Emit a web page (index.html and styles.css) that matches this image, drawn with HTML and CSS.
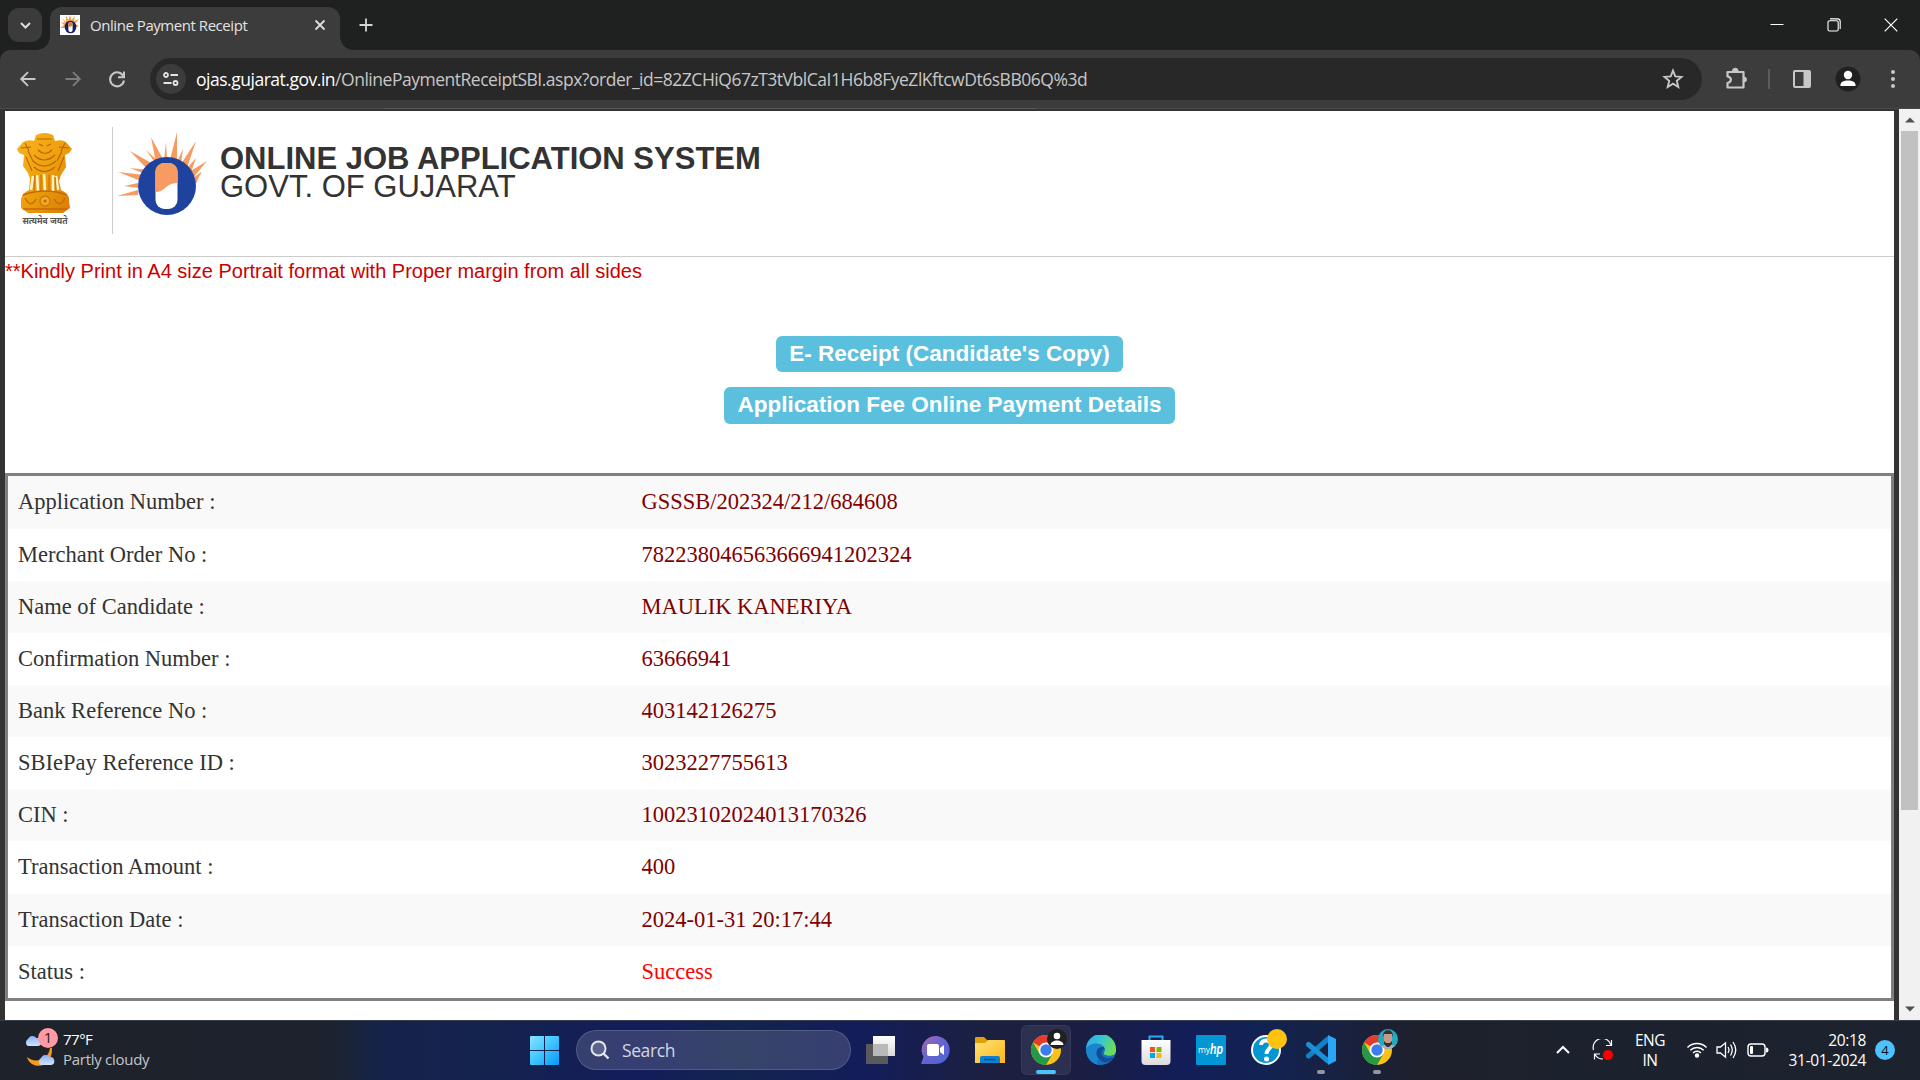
FILE: index.html
```html
<!DOCTYPE html>
<html lang="en">
<head>
<meta charset="utf-8">
<title>Online Payment Receipt</title>
<link rel="stylesheet" href="styles.css">
</head>
<body>
<svg class="defs" aria-hidden="true">
  <defs>
    <linearGradient id="win" x1="0" y1="0" x2="1" y2="1"><stop offset="0" stop-color="#8be3ff"/><stop offset=".45" stop-color="#45c9ff"/><stop offset="1" stop-color="#0798f8"/></linearGradient>
    <linearGradient id="chat" x1="0" y1="0" x2="1" y2="1"><stop offset="0" stop-color="#a86ab0"/><stop offset=".5" stop-color="#6264cf"/><stop offset="1" stop-color="#4c62d4"/></linearGradient>
    <linearGradient id="folder" x1="0" y1="0" x2="1" y2="1"><stop offset="0" stop-color="#ffe17a"/><stop offset="1" stop-color="#fdb813"/></linearGradient>
    <linearGradient id="edgeTop" x1="0" y1="0" x2="1" y2=".4"><stop offset="0" stop-color="#2aa9e0"/><stop offset=".5" stop-color="#36c3d8"/><stop offset="1" stop-color="#68dc5c"/></linearGradient>
    <linearGradient id="gold" x1="0" y1="0" x2="1" y2="1"><stop offset="0" stop-color="#f9b520"/><stop offset=".5" stop-color="#eda00c"/><stop offset="1" stop-color="#d97a06"/></linearGradient>
    <linearGradient id="cloud" x1="0" y1="0" x2="0" y2="1"><stop offset="0" stop-color="#88b0f5"/><stop offset="1" stop-color="#d3e4ff"/></linearGradient>
    <linearGradient id="bag" x1="0" y1="0" x2="0" y2="1"><stop offset="0" stop-color="#ffffff"/><stop offset="1" stop-color="#dcdcdc"/></linearGradient>
    <linearGradient id="paneFront" x1="0" y1="0" x2="0" y2="1"><stop offset="0" stop-color="#ffffff"/><stop offset="1" stop-color="#d8d8d8"/></linearGradient>
    <g id="chrome">
      <circle cx="15" cy="15" r="15" fill="#fbc116"/>
      <path d="M15 15 L2 7.500 A15 15 0 0 1 28 7.500 L15 7.500Z" fill="#e33b2e"/>
      <path d="M2 7.500 A15 15 0 0 0 15 30 L21.500 18.700 L15 15 L8.500 18.700Z" fill="#249a48"/>
      <circle cx="15" cy="15" r="7.500" fill="#fff"/>
      <circle cx="15" cy="15" r="5.700" fill="#3b7ded"/>
    </g>
    <g id="cloudShape"><path d="M4 12 A4 4 0 0 1 4 5 A5 5 0 0 1 12.500 4 A4 4 0 0 1 14 12Z" fill="url(#cloud)"/></g>
  </defs>
</svg>

<div class="screen">
  <header class="tabstrip">
    <div class="tab-search"><svg width="34" height="34" viewBox="0 0 34 34"><path d="M13 15 L17.500 19.500 L22 15" fill="none" stroke="#dedede" stroke-width="2"/></svg></div>
    <div class="tab">
      <svg class="favicon" width="20" height="20" viewBox="0 0 20 20"><rect width="20" height="20" fill="#fff"/><path d="M2 3 L6 7 L6 1 L8.500 5 L10 0 L11.500 5 L15 1 L14 6 L19 4 L15 9 L19 11 L14 13 L5 13 L0 13 L4 10 L1 7 L5 8Z" fill="#f0a24b"/><ellipse cx="10.500" cy="12" rx="5.800" ry="6.300" fill="#151d63"/><rect x="8.400" y="7" width="4.200" height="10" rx="2" fill="#fff"/><path d="M8.400 12 V9 a2.100 2.100 0 0 1 4.200 0 V11Z" fill="#e07b28"/></svg>
      <span class="tab-title">Online Payment Receipt</span>
      <svg class="tab-close" width="16" height="16" viewBox="0 0 16 16"><path d="M3.500 3.500 L12.500 12.500 M12.500 3.500 L3.500 12.500" stroke="#dedede" stroke-width="1.800"/></svg>
    </div>
    <svg class="new-tab" width="16" height="16" viewBox="0 0 16 16"><path d="M8 1.500 V14.500 M1.500 8 H14.500" stroke="#d5d5d5" stroke-width="1.800"/></svg>
    <div class="window-buttons">
      <svg width="14" height="14" viewBox="0 0 14 14"><path d="M.500 6.500 H13.500" stroke="#fff" stroke-width="1"/></svg>
      <svg width="14" height="14" viewBox="0 0 14 14"><rect x="1" y="2.800" width="10.200" height="10.200" rx="1.500" fill="none" stroke="#fff" stroke-width="1.100"/><path d="M3 .900 H10.500 A2.700 2.700 0 0 1 13.200 3.600 V11" fill="none" stroke="#fff" stroke-width="1.100"/></svg>
      <svg width="14" height="14" viewBox="0 0 14 14"><path d="M.700 .700 L13.300 13.300 M13.300 .700 L.700 13.300" stroke="#fff" stroke-width="1.200"/></svg>
    </div>
  </header>

  <nav class="toolbar">
    <svg class="nav-icon" width="20" height="20" viewBox="0 0 20 20"><path d="M17.500 10 H3.500 M10 3.200 L3.200 10 L10 16.800" fill="none" stroke="#c7c7c7" stroke-width="1.900"/></svg>
    <svg class="nav-icon" width="20" height="20" viewBox="0 0 20 20"><path d="M2.500 10 H16.500 M10 3.200 L16.800 10 L10 16.800" fill="none" stroke="#7c7c7c" stroke-width="1.900"/></svg>
    <svg class="nav-icon" width="20" height="20" viewBox="0 0 20 20"><path d="M16.500 7.500 A7 7 0 1 0 17 11.500" fill="none" stroke="#c7c7c7" stroke-width="2"/><path d="M17 2.500 V8.300 H11" fill="none" stroke="#c7c7c7" stroke-width="2"/></svg>
    <div class="omnibox">
      <span class="site-info"><svg width="18" height="16" viewBox="0 0 18 16" fill="none" stroke="#e3e3e3" stroke-width="1.800"><circle cx="4" cy="4" r="2"/><path d="M8.500 4 H16 M1.500 12 H9.500"/><circle cx="13.500" cy="12" r="2"/></svg></span>
      <span class="url"><b>ojas.gujarat.gov.in</b>/OnlinePaymentReceiptSBI.aspx?order_id=82ZCHiQ67zT3tVblCaI1H6b8FyeZlKftcwDt6sBB06Q%3d</span>
      <svg class="star" width="22" height="22" viewBox="0 0 22 22"><path d="M11 2.600 L13.300 8.400 L19.500 8.900 L14.800 12.900 L16.300 19 L11 15.700 L5.700 19 L7.200 12.900 L2.500 8.900 L8.700 8.400Z" fill="none" stroke="#c7c7c7" stroke-width="1.900"/></svg>
    </div>
    <svg class="ext" width="24" height="24" viewBox="0 0 24 24"><path d="M3.500 5 H19.500 V20.500 H3.500 V16 C8 15 8 10.500 3.500 9.500Z" fill="none" stroke="#c7c7c7" stroke-width="2.200" stroke-linejoin="round"/><path d="M8.500 4 a2.800 2.800 0 0 1 5.600 0Z M20 10 a2.500 2.500 0 0 1 0 5Z" fill="#c7c7c7" stroke="#c7c7c7"/></svg>
    <span class="toolbar-sep"></span>
    <svg class="panel" width="20" height="20" viewBox="0 0 20 20"><rect x="2" y="2" width="16" height="16" rx="1" fill="none" stroke="#c7c7c7" stroke-width="2"/><rect x="11.500" y="2" width="6.500" height="16" fill="#c7c7c7"/></svg>
    <svg class="profile" width="26" height="26" viewBox="0 0 26 26"><circle cx="13" cy="13" r="12.500" fill="#1f2020"/><circle cx="13" cy="9" r="4.200" fill="#fff"/><path d="M5.500 20 V18.500 C6 13 20 13 20.500 18.500 V20Z" fill="#fff"/></svg>
    <svg class="menu" width="6" height="20" viewBox="0 0 6 20" fill="#c7c7c7"><circle cx="3" cy="3" r="2"/><circle cx="3" cy="10" r="2"/><circle cx="3" cy="17" r="2"/></svg>
  </nav>
  <div class="toolbar-edge"><i></i></div>

  <div class="viewport">
    <main class="page">
      <div class="banner">
        <svg class="emblem" width="58" height="96" viewBox="0 0 58 96">
          <path d="M20 2 Q29 -2 37 2 L39 8 Q46 6 50 9 L56 16 L53 20 L49 22 L50 34 L45 42 L43 48 L45 57 Q54 61 53 68 L54 75 L47 80 L12 80 L5 75 L5 66 Q6 60 13 57 L14 46 L12 40 L7 33 L8 22 L3 20 L1 16 L7 9 Q12 6 18 8Z" fill="url(#gold)"/>
          <path d="M15 57 L17 43 M22 58 L21 42 M29 58 L28 41 M37 58 L37 42 M42 57 L40 43" stroke="#fff3c8" stroke-width="2.600" fill="none"/>
          <path d="M18 58 L19 42 M25 58 V42 M33 58 V42 M40 58 L39 44" stroke="#d67c06" stroke-width="1.500"/>
          <path d="M21 6 H36 M23 11 L27 13 M35 11 L31 13 M22 17 Q29 24 36 17 M18 22 Q28 32 39 22 M17 28 Q28 38 40 28 M18 34 Q28 43 39 34 M10 24 L16 38 M48 24 L42 38 M12 18 L17 28 M46 18 L41 28 M5 15 L15 14 M43 14 L53 15 M9 10 L13 18 M49 10 L45 18" stroke="#b86406" stroke-width="1.100" fill="none"/>
          <path d="M7 62 Q29 54 51 62 M7 76 H51 M9 65 Q15 76 20 66 M38 66 Q44 76 49 65" stroke="#c46a08" stroke-width="1.400" fill="none"/>
          <circle cx="29" cy="68" r="5" fill="#f0ab25" stroke="#cc780c" stroke-width="1.300"/><circle cx="29" cy="68" r="1.600" fill="#c46a08"/>
          <text class="motto" x="29" y="91" text-anchor="middle" textLength="45" lengthAdjust="spacingAndGlyphs">सत्यमेव जयते</text>
        </svg>
        <div class="logo"><svg width="92" height="86" viewBox="0 0 92 86">
          <path d="M21 63 L0 64 L21 58Z M21 56 L7 54 L21 51Z M24 49 L1 40 L27 43Z M28 42 L13 36 L31 38Z M31 38 L13 19 L38 33Z M39 32 L29 18 L43 31Z M39 31 L34 5 L47 29Z M47 28 L49 10 L50 28Z M53 28 L60 0 L60 29Z M60 30 L66 17 L64 32Z M64 32 L79 9 L70 36Z M70 36 L79 26 L74 40Z M72 40 L90 29 L76 46Z M76 46 L84 40 L79 52Z M74 48 L85 40 L78 51Z" fill="#f79b62"/>
          <circle cx="50" cy="54" r="29" fill="#1e429d"/>
          <rect x="38.500" y="31" width="22" height="46" rx="9" fill="#fff"/>
          <path d="M38.500 60 V39 a9 8 0 0 1 9-8 h4 a9 8 0 0 1 9 8 V51 C50 50 48 60 38.500 60Z" fill="#f79b62"/>
        </svg></div>
        <h1 class="title"><b>ONLINE JOB APPLICATION SYSTEM</b><span>GOVT. OF GUJARAT</span></h1>
      </div>
      <p class="notice">**Kindly Print in A4 size Portrait format with Proper margin from all sides</p>
      <div class="labels">
        <span class="label">E- Receipt (Candidate's Copy)</span>
        <span class="label wide">Application Fee Online Payment Details</span>
      </div>
      <dl class="receipt">
        <div class="tall"><dt>Application Number :</dt><dd>GSSSB/202324/212/684608</dd></div>
        <div><dt>Merchant Order No :</dt><dd>782238046563666941202324</dd></div>
        <div><dt>Name of Candidate :</dt><dd>MAULIK KANERIYA</dd></div>
        <div><dt>Confirmation Number :</dt><dd>63666941</dd></div>
        <div><dt>Bank Reference No :</dt><dd>403142126275</dd></div>
        <div><dt>SBIePay Reference ID :</dt><dd>3023227755613</dd></div>
        <div><dt>CIN :</dt><dd>10023102024013170326</dd></div>
        <div class="tall"><dt>Transaction Amount :</dt><dd>400</dd></div>
        <div><dt>Transaction Date :</dt><dd>2024-01-31 20:17:44</dd></div>
        <div><dt>Status :</dt><dd class="ok">Success</dd></div>
      </dl>
    </main>
    <aside class="scrollbar">
      <svg width="10" height="6" viewBox="0 0 10 6"><path d="M0 5.500 L5 .500 L10 5.500Z" fill="#505050"/></svg>
      <span class="thumb"></span>
      <svg width="10" height="6" viewBox="0 0 10 6"><path d="M0 .500 L5 5.500 L10 .500Z" fill="#505050"/></svg>
    </aside>
  </div>

  <footer class="taskbar">
    <div class="weather">
      <svg width="36" height="44" viewBox="0 0 36 44">
        <path d="M27 20 A14 14 0 0 1 4 29 C7 42 30 42 29 20Z" fill="#f69a1f"/>
        <use href="#cloudShape" x="1" y="6"/><use href="#cloudShape" x="14" y="25"/>
        <circle cx="25" cy="10" r="10" fill="#ff99a4"/><text class="badge-text" x="25" y="15" text-anchor="middle">1</text>
      </svg>
      <div class="weather-text"><span>77°F</span><small>Partly cloudy</small></div>
    </div>
    <svg class="start" width="29" height="29" viewBox="0 0 29 29"><path d="M0 1 a1 1 0 0 1 1-1 H14 V14 H0Z M15 0 H28 a1 1 0 0 1 1 1 V14 H15Z M0 15 H14 V29 H1 a1 1 0 0 1-1-1Z M15 15 H29 V28 a1 1 0 0 1-1 1 H15Z" fill="url(#win)"/></svg>
    <div class="search"><svg width="20" height="20" viewBox="0 0 20 20"><circle cx="8.500" cy="8.500" r="7" fill="#59638c" stroke="#e4e6ec" stroke-width="2"/><path d="M13.500 13.500 L18.500 18.500" stroke="#e4e6ec" stroke-width="2.400"/></svg><span>Search</span></div>
    <div class="apps">
      <span class="app"><svg width="30" height="30" viewBox="0 0 30 30"><rect x="1" y="9" width="22" height="20" fill="#5a5a5c"/><rect x="8" y="1" width="22" height="20" fill="url(#paneFront)"/><rect x="8" y="9" width="15" height="12" fill="#b9b9b9"/></svg></span>
      <span class="app"><svg width="30" height="30" viewBox="0 0 30 30"><path d="M1 29 L3.500 22 A14 14 0 1 1 15 29Z" fill="url(#chat)"/><rect x="7" y="9" width="12" height="12" rx="2" fill="#fff"/><path d="M20 13 L24 10 V20 L20 17Z" fill="#fff"/></svg></span>
      <span class="app"><svg width="30" height="30" viewBox="0 0 30 30"><path d="M0 9 V3 a1 1 0 0 1 1-1 H9 L13 6 H29 V12 H0Z" fill="#e0a00a"/><path d="M0 8 H10 L13 5 H29 a1 1 0 0 1 1 1 V28 H0Z" fill="url(#folder)"/><path d="M5 28 V23 a2 2 0 0 1 2-2 H23 a2 2 0 0 1 2 2 V28Z" fill="#0f7fd0"/><path d="M9 24.500 H21" stroke="#07539a" stroke-width="1.500"/></svg></span>
      <span class="app active"><svg width="38" height="38" viewBox="0 0 38 38"><use href="#chrome" x="1" y="6"/><circle cx="27" cy="10" r="10" fill="#202020"/><circle cx="27" cy="7" r="3.300" fill="#fff"/><path d="M20.500 16 C21 10 33 10 33.500 16Z" fill="#fff"/></svg><i></i></span>
      <span class="app"><svg width="30" height="30" viewBox="0 0 30 30"><circle cx="15" cy="15" r="15" fill="#1670bd"/><path d="M0 14 A15 15 0 0 1 30 14 C31 20 25 22 19 20 C16 18 20 17 18.500 13 C16 8 5 7 0 14Z" fill="url(#edgeTop)"/><path d="M0 14 C4 7 15 7 18 12 C10 10 9 20 15 25 C10 24 9 29 15 30 C5 30 0 22 0 14Z" fill="#1a84cf"/><path d="M18 12 C9 11 8 21 15 26 C20 29 25 27 28 22 C24 24 16 24 15.500 18 C15.500 15 17 14 18.500 14Z" fill="#134d94"/></svg></span>
      <span class="app"><svg width="30" height="30" viewBox="0 0 30 30"><path d="M8.500 7 V1.500 H21.500 V7" fill="none" stroke="#28aef0" stroke-width="2"/><path d="M.500 5 H29.500 V26 a4 4 0 0 1-4 4 H4.500 a4 4 0 0 1-4-4Z" fill="url(#bag)"/><path d="M9 12 h5 v5 h-5z" fill="#f25022"/><path d="M15.500 12 h5 v5 h-5z" fill="#7fba00"/><path d="M9 18 h5 v5 h-5z" fill="#00a4ef"/><path d="M15.500 18 h5 v5 h-5z" fill="#ffb900"/></svg></span>
      <span class="app"><svg width="30" height="30" viewBox="0 0 30 30"><rect width="30" height="30" rx="1" fill="#0296d4"/><text class="hp" x="2" y="18" textLength="12" lengthAdjust="spacingAndGlyphs">my</text><text class="hp bold" x="14" y="19" textLength="13" lengthAdjust="spacingAndGlyphs">hp</text></svg></span>
      <span class="app"><svg width="38" height="38" viewBox="0 0 38 38"><circle cx="16" cy="21" r="14" fill="#0296d4" stroke="#fff" stroke-width="2"/><path d="M11 16 C11 10 21 10 21 16 C21 20 16.500 20 16.500 25" fill="none" stroke="#fff" stroke-width="4"/><circle cx="16.500" cy="30" r="2.500" fill="#fff"/><circle cx="27" cy="10" r="10" fill="#ffc20e"/></svg></span>
      <span class="app idle"><svg width="30" height="30" viewBox="0 0 30 30"><path d="M2.500 21 L22 4" stroke="#1380c8" stroke-width="5" stroke-linecap="round"/><path d="M2.500 9.500 L22 26" stroke="#1891da" stroke-width="5" stroke-linecap="round"/><path d="M22 0 L30 4 V26 L22 30Z" fill="#2ba5f5"/></svg><i></i></span>
      <span class="app idle"><svg width="38" height="38" viewBox="0 0 38 38"><use href="#chrome" x="1" y="6"/><clipPath id="face"><circle cx="27" cy="10" r="10"/></clipPath><g clip-path="url(#face)"><rect x="17" width="20" height="20" fill="#25a9bd"/><path d="M18 20 C19 14 35 14 36 20Z" fill="#a9b4bd"/><path d="M23 5 h8 v8 l-2 4 h-4 l-2-4z" fill="#c79a86"/><path d="M22 8 C21 -1 33 -1 32 8 L31 5 H23Z M23 12 L25 14 H29 L31 12 V15 L28 18 H26 L23 15Z" fill="#3a2f32"/></g></svg><i></i></span>
    </div>
    <div class="tray">
      <svg class="chev" width="16" height="10" viewBox="0 0 16 10"><path d="M2 8 L8 2 L14 8" fill="none" stroke="#fff" stroke-width="2"/></svg>
      <svg class="sync" width="22" height="22" viewBox="0 0 22 22"><path d="M1.500 11 A9 9 0 0 1 19 6 M19.500 1 V6.500 H14 M11 20 A9 9 0 0 1 3 15.500 M2.500 20.500 V15 H8" fill="none" stroke="#fff" stroke-width="1.200"/><circle cx="16" cy="16" r="5" fill="#f00"/></svg>
      <div class="lang"><span>ENG</span><span>IN</span></div>
      <svg class="wifi" width="22" height="18" viewBox="0 0 22 18" fill="none" stroke="#fff" stroke-width="1.500"><path d="M1.500 6.500 A13.500 13.500 0 0 1 20.500 6.500 M4.300 9.300 A9.500 9.500 0 0 1 17.700 9.300 M7 12 A5.700 5.700 0 0 1 15 12"/><circle cx="11" cy="14.500" r="1.500" fill="#fff"/></svg>
      <svg class="sound" width="22" height="18" viewBox="0 0 22 18" fill="none" stroke="#fff" stroke-width="1.300"><path d="M1 6 H4.500 L9.500 1.800 V16.200 L4.500 12 H1Z"/><path d="M12 6 Q14 9 12 12 M14.500 3.500 Q18 9 14.500 14.500 M17 1 Q22.500 9 17 17"/></svg>
      <svg class="battery" width="22" height="14" viewBox="0 0 22 14"><rect x="1" y="1" width="17" height="12" rx="3" fill="none" stroke="#fff" stroke-width="1.400"/><rect x="3" y="3" width="3" height="8" rx="1" fill="#fff"/><path d="M19 4.500 q2.500 0 2.500 2.500 q0 2.500 -2.500 2.500z" fill="#fff"/></svg>
      <div class="clock"><span>20:18</span><span>31-01-2024</span></div>
      <span class="count">4</span>
    </div>
  </footer>
</div>
</body>
</html>
```
FILE: styles.css
```css
* { box-sizing: border-box; }
body { margin: 0; overflow: hidden; font-family: "Liberation Sans", Arial, sans-serif; }
svg { display: block; flex: none; }
.defs { position: absolute; width: 0; height: 0; }

.screen { width: 1920px; height: 1080px; display: flex; flex-direction: column; background: #333; overflow: hidden; }

/* Tab strip */
.tabstrip { height: 50px; flex: none; display: flex; align-items: center; background: #1f2120; padding-left: 8px; color: #e3e3e3; font-family: "Open Sans", sans-serif; }
.tab-search { width: 34px; height: 34px; border-radius: 11px; background: #3b3b3b; }
.tab { position: relative; display: flex; align-items: center; width: 290px; height: 43px; margin: 7px 0 0 8px; padding: 0 12px 7px 10px; border-radius: 12px 12px 0 0; background: #3c3c3c; }
.tab::before, .tab::after { content: ""; position: absolute; bottom: 0; width: 13px; height: 13px; }
.tab::before { left: -13px; background: radial-gradient(circle at 0 0, transparent 12.5px, #3c3c3c 13px); }
.tab::after { right: -13px; background: radial-gradient(circle at 100% 0, transparent 12.5px, #3c3c3c 13px); }
.tab-title { margin-left: 10px; font-size: 15px; letter-spacing: -0.45px; white-space: nowrap; }
.tab-close { margin-left: auto; }
.new-tab { margin-left: 17.5px; }
.window-buttons { margin-left: auto; display: flex; gap: 43px; padding-right: 22px; }

/* Toolbar */
.toolbar { height: 58px; flex: none; display: flex; align-items: center; background: #3c3c3c; border-radius: 10px 10px 0 0; padding-left: 18px; box-shadow: 0 -10px 0 #1f2120; clip-path: none; }
.tabstrip { z-index: 1; }
.nav-icon + .nav-icon { margin-left: 24.5px; }
.omnibox { display: flex; align-items: center; width: 1552px; height: 42px; margin-left: 23px; padding: 0 18px 0 6px; border-radius: 21px; background: #282828; }
.site-info { width: 30px; height: 30px; border-radius: 50%; background: #3c3c3c; display: grid; place-items: center; }
.url { margin-left: 10px; font: 17.5px "Open Sans", sans-serif; letter-spacing: -0.48px; color: #c7c7c7; white-space: nowrap; }
.url b { font-weight: 400; color: #fff; }
.star { margin-left: auto; }
.ext { margin-left: 22px; }
.toolbar-sep { width: 2px; height: 20px; margin-left: 20px; background: #5c5c5c; }
.panel { margin-left: 22px; }
.profile { margin-left: 23px; }
.menu { margin-left: 29px; }
.toolbar-edge { height: 1px; flex: none; background: #4b4848; }
.toolbar-edge i { display: block; width: 652px; height: 1px; margin-left: 384px; background: #5b5959; }

/* Page area */
.viewport { flex: 1; min-height: 0; display: flex; padding-left: 5px; }
.page { width: 1889px; margin: 2px 5px 0 0; background: #fff; color: #333; overflow: hidden; }
.banner { display: flex; height: 146px; padding-top: 16px; border-bottom: 1px solid #ccc; }
.emblem { margin: 6px 0 0 11px; }
.motto { font: bold 10px "Noto Sans", "Noto Sans Devanagari", sans-serif; fill: #555; }
.logo { margin-left: 38px; padding: 5px 0 0 4px; border-left: 1px solid #ccc; height: 107px; }
.title { margin: 18px 0 0 11px; font-size: 31px; line-height: 28px; font-weight: 400; }
.title b, .title span { display: block; white-space: nowrap; }
.notice { margin: 3px 0 0; font-size: 20px; line-height: 23px; color: #c00; }
.labels { display: flex; flex-direction: column; align-items: center; gap: 15px; margin: 53px 0 49px; }
.label { height: 36px; padding: 5px 13.5px 0; border-radius: 6px; background: #5bc0de; color: #fff; font-size: 22.5px; line-height: 25px; font-weight: 700; }
.label.wide { height: 37px; }
.receipt { margin: 0; display: flex; flex-direction: column; border: 3px solid #808080; font: 22.5px/32px "Liberation Serif", "Times New Roman", serif; }
.receipt div { height: 52px; display: flex; padding: 10px 0 0 10px; }
.receipt .tall { height: 53px; }
.receipt div:nth-child(odd) { background: #f9f9f9; }
.receipt dt { width: 623.5px; }
.receipt dd { margin: 0; color: maroon; }
.receipt .ok { color: #f00; }

.scrollbar { width: 21px; display: flex; flex-direction: column; align-items: center; background: #f1f1f1; padding: 8px 0; }
.thumb { width: 17px; height: 679px; margin: 8px 0 auto; background: #c1c1c1; }

/* Taskbar */
.taskbar { height: 60px; flex: none; display: flex; align-items: center; padding-bottom: 1px; color: #fff; border-top: 1px solid #38404c; font-family: "Open Sans", sans-serif; background: linear-gradient(90deg, #1e222a 0, #1d232d 330px, #15234b 380px, #14224f 500px, #131d5b 640px, #13244f 740px, #131d5a 860px, #1c2040 990px, #1b1e40 1070px, #131d58 1180px, #122352 1270px, #1a2038 1370px, #1e212b 1420px, #1c222d 1560px, #1c222e 100%); }
.weather { display: flex; width: 530px; padding-left: 23px; margin-top: -1px; }
.weather-text { display: flex; flex-direction: column; margin-left: 4px; font-size: 15px; line-height: 20px; letter-spacing: -0.5px; padding-top: 1px; }
.weather-text small { font-size: 15px; color: #c4c6c9; letter-spacing: -0.28px; }
.badge-text { font: 15px "Open Sans", sans-serif; fill: #222; }
.search { display: flex; align-items: center; width: 275px; height: 40px; margin-left: 17px; padding-left: 13px; border-radius: 20px; background: rgba(255,255,255,.15); border: 1px solid rgba(255,255,255,.14); font-size: 17.5px; letter-spacing: -0.4px; color: #d5d7e0; }
.search span { margin-left: 12px; }
.apps { display: flex; margin-left: 1.4px; }
.app { position: relative; width: 55.2px; height: 50px; display: grid; place-items: center; }
.app svg[width="38"] { margin: -5px 0 0 6px; }
.active { background: rgba(255,255,255,.08); border-radius: 6px; box-shadow: inset 0 0 0 1px rgba(255,255,255,.05); width: 50px; margin: 0 2.6px; }
.app i { position: absolute; bottom: 1px; left: 50%; width: 8px; height: 4px; margin-left: -4px; border-radius: 2px; background: #9297a3; }
.app.active i { width: 20px; margin-left: -10px; background: #4cc2ff; }
.hp { font: 9px "Open Sans", sans-serif; fill: #fff; }
.hp.bold { font: italic bold 14px "Liberation Sans", sans-serif; }
.tray { margin-left: auto; display: flex; align-items: center; padding-right: 25px; font-size: 15.5px; line-height: 20px; }
.sync { margin-left: 21px; }
.lang { width: 60px; margin-left: 6px; text-align: center; display: flex; flex-direction: column; letter-spacing: -0.5px; }
.wifi { margin-left: 6px; }
.sound { margin-left: 8px; }
.battery { margin-left: 9px; }
.clock { width: 97px; display: flex; flex-direction: column; text-align: right; letter-spacing: -0.35px; }
.count { width: 20px; height: 20px; margin-left: 9px; border-radius: 50%; background: #4cc2ff; color: #111; font-size: 13px; text-align: center; }
```
